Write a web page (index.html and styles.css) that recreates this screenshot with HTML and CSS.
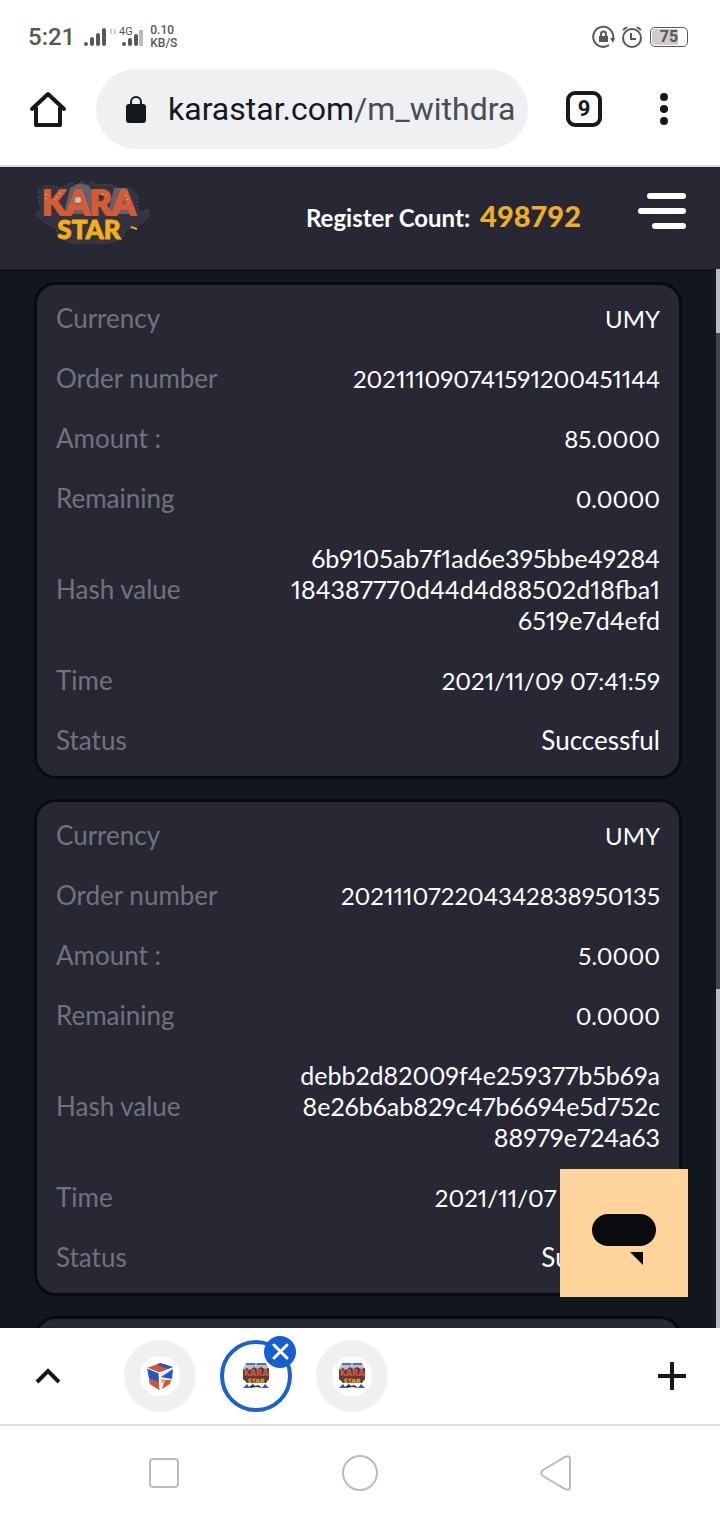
FILE: index.html
```html
<!DOCTYPE html>
<html lang="en">
<head>
  <meta charset="UTF-8">
  <meta name="viewport" content="width=device-width, initial-scale=1">
  <title>Kara Star</title>
  <link rel="stylesheet" href="styles.css">
</head>
<body>
  <!-- Phone status bar -->
  <div class="status-bar">
    <span class="clock">5:21</span>
    <svg class="signal" width="60" height="24" viewBox="0 0 60 24" aria-hidden="true">
      <g stroke="#5c5658" stroke-width="4" stroke-linecap="round">
        <path d="M3 19v0M9 14v5M15 10v9M21 5v14"/>
        <path d="M41 19v0M47 15v4M53 11v8"/>
      </g>
      <path d="M58 5v16" stroke="#bbb" stroke-width="4"/>
      <path d="M28 4v5M32 4v5M27 6l2-2M33 7l-2 2" stroke="#d2d2d2" stroke-width="2"/>
      <text x="36" y="10" class="network">4G</text>
    </svg>
    <span class="speed">0.10<br>KB/S</span>
    <div class="status-right">
      <svg width="24" height="24" viewBox="0 0 24 24" fill="none" stroke="#5c5658" stroke-width="2" aria-hidden="true">
        <path d="M17 20a10 10 0 1 1 4-6"/>
        <path d="M18 13l5 0-2 5z" fill="#5c5658" stroke="none"/>
        <path d="M7 11h9v6H7z" fill="#5c5658" stroke="none"/>
        <path d="M9 12V9a2.500 2.500 0 0 1 5 0v3"/>
      </svg>
      <svg width="24" height="24" viewBox="0 0 24 24" fill="none" stroke="#5c5658" stroke-width="2" aria-hidden="true">
        <circle cx="12" cy="13" r="9"/>
        <path d="M11 8v6h5M3 5l4-3M21 5l-4-3"/>
      </svg>
      <span class="battery"><span>75</span></span>
    </div>
  </div>

  <!-- Browser toolbar -->
  <div class="toolbar">
    <button type="button" class="icon-btn" aria-label="Home">
      <svg width="36" height="36" viewBox="0 0 36 36" fill="none" stroke="#15181c" stroke-width="4" stroke-linecap="round" stroke-linejoin="round">
        <path d="M6 17v17h24V17M2 18L18 3l16 15"/>
      </svg>
    </button>
    <a href="#" class="address">
      <svg width="20" height="27" viewBox="0 0 20 27" aria-hidden="true">
        <rect y="8" width="20" height="19" rx="3" fill="#15181c"/>
        <path d="M5 9V6a5 5 0 0 1 10 0v3" fill="none" stroke="#15181c" stroke-width="2"/>
      </svg>
      <span class="url">karastar.com<span class="path">/m_withdra</span></span>
    </a>
    <button type="button" class="tab-count" aria-label="Tabs">9</button>
    <button type="button" class="icon-btn" aria-label="More">
      <svg width="36" height="36" viewBox="0 0 36 36" fill="#15181c">
        <circle cx="18" cy="6" r="4"/><circle cx="18" cy="18" r="4"/><circle cx="18" cy="30" r="4"/>
      </svg>
    </button>
  </div>

  <!-- Site header -->
  <header class="header">
    <a href="#" class="logo" aria-label="Kara Star">
      <svg width="116" height="64" viewBox="0 0 116 64">
        <path d="M4 10l10-5 12 3 10-5 8 2 5-5 3 5 6-4 4 4 14-1 8 4 12 0 8 8-1 12 5 4 6-3 4 5-8 7-8 6-10 2-4 10-14 4-20 2-18-2-12-6-2-9-12-6-9-8 6-5-2-8z" fill="#33343f" stroke="#4b4d59" stroke-dasharray="2 2"/>
        <path d="M30 34l6-26 10-5 9 3 8 12-2 16z" fill="#66606a"/>
        <path d="M74 34l6-26 12 0 8 26z" fill="#66606a"/>
        <text x="55" y="35" class="logo-kara">KARA</text>
        <text x="55" y="59" class="logo-star">STAR</text>
        <circle cx="44" cy="20" r="3" fill="#c0c4c3"/>
        <path d="M97 47l6 2" stroke="#e0ac28" stroke-width="2"/>
        <path d="M12 14l0 8M26 13l-5 7M68 14l6 1M92 15l3 8" stroke="#f4a56b" stroke-width="2" stroke-dasharray="1 3"/>
      </svg>
    </a>
    <div class="count">Register Count: <strong>498792</strong></div>
    <button type="button" class="menu-btn" aria-label="Menu">
      <span class="bar"></span>
      <span class="bar long"></span>
      <span class="bar short"></span>
    </button>
  </header>

  <main class="content">
    <div class="records">
      <dl class="card">
        <div class="row"><dt>Currency</dt><dd>UMY</dd></div>
        <div class="row"><dt>Order number</dt><dd>202111090741591200451144</dd></div>
        <div class="row"><dt>Amount :</dt><dd>85.0000</dd></div>
        <div class="row"><dt>Remaining</dt><dd>0.0000</dd></div>
        <div class="row"><dt>Hash value</dt><dd class="hash">6b9105ab7f1ad6e395bbe49284<br>184387770d44d4d88502d18fba1<br>6519e7d4efd</dd></div>
        <div class="row"><dt>Time</dt><dd>2021/11/09 07:41:59</dd></div>
        <div class="row"><dt>Status</dt><dd class="state">Successful</dd></div>
      </dl>
      <dl class="card">
        <div class="row"><dt>Currency</dt><dd>UMY</dd></div>
        <div class="row"><dt>Order number</dt><dd>202111072204342838950135</dd></div>
        <div class="row"><dt>Amount :</dt><dd>5.0000</dd></div>
        <div class="row"><dt>Remaining</dt><dd>0.0000</dd></div>
        <div class="row"><dt>Hash value</dt><dd class="hash">debb2d82009f4e259377b5b69a<br>8e26b6ab829c47b6694e5d752c<br>88979e724a63</dd></div>
        <div class="row"><dt>Time</dt><dd>2021/11/07 22:04:34</dd></div>
        <div class="row"><dt>Status</dt><dd class="state">Successful</dd></div>
      </dl>
      <div class="card next"></div>
    </div>
    <div class="scrollbar"></div>
    <button type="button" class="chat-btn" aria-label="Chat">
      <svg width="64" height="51" viewBox="0 0 64 51" fill="#090b0e">
        <rect width="64" height="32" rx="16"/>
        <path d="M38 38h13v13z"/>
      </svg>
    </button>
  </main>

  <!-- Browser tab strip -->
  <div class="tabs">
    <button type="button" class="icon-btn" aria-label="Show tabs">
      <svg width="36" height="36" viewBox="0 0 36 36" fill="none" stroke="#15181c" stroke-width="4">
        <path d="M7 24l11-11 11 11"/>
      </svg>
    </button>
    <div class="tab-list">
      <button type="button" class="tab" aria-label="Tab 1">
        <span class="tab-icon">
          <svg width="28" height="28" viewBox="0 0 28 28">
            <path d="M1 6l12 5 1 17L4 22z" fill="#2459c4"/>
            <path d="M13 11l14-5-2 16-11 6z" fill="#e8eaf0"/>
            <path d="M1 6L14 1l13 4-13 6z" fill="#d45635"/>
            <path d="M14 1l13 4-5 2-11-4z" fill="#2459c4"/>
            <path d="M3 16l10 4v8l-9-6z" fill="#d45635"/>
            <path d="M15 15l12-8-1 10z" fill="#2459c4"/>
            <path d="M19 18l6 0-1 4-8 5z" fill="#d45635"/>
            <circle cx="17" cy="19" r="2" fill="#e9b83d"/>
            <path d="M1 6l12 5 14-5M13 11l1 17" stroke="#fff" fill="none"/>
          </svg>
        </span>
      </button>
      <button type="button" class="tab active" aria-label="Close tab 2">
        <span class="tab-icon">
          <svg width="28" height="28" viewBox="0 0 28 28">
            <path d="M4 1h20l3 6v8H1V7z" fill="#b9bfc9"/>
            <path d="M4 2h9M15 2h9" stroke="#2459b8" stroke-width="1.5"/>
            <path d="M1 8l4-2 3 2 4-3 3 2 4-2 4 2 4-1v11l-3 4H5l-4-4z" fill="#5b3b40"/>
            <text x="14" y="14" class="tab-logo-kara">KARA</text>
            <text x="14" y="21" class="tab-logo-star">STAR</text>
            <path d="M1 26l4-4 3 4zM27 26l-4-4-3 4z" fill="#2c5cb5"/>
            <path d="M7 25l4-3 2 2 3-1 5 3-7-1-5 1z" fill="#343640"/>
          </svg>
        </span>
        <span class="close">
          <svg width="32" height="32" viewBox="0 0 32 32" stroke="#fff" stroke-width="3" stroke-linecap="round">
            <path d="M10 9l13 13M23 9L10 22"/>
          </svg>
        </span>
      </button>
      <button type="button" class="tab" aria-label="Tab 3">
        <span class="tab-icon">
          <svg width="28" height="28" viewBox="0 0 28 28">
            <path d="M4 1h20l3 6v8H1V7z" fill="#b9bfc9"/>
            <path d="M4 2h9M15 2h9" stroke="#2459b8" stroke-width="1.5"/>
            <path d="M1 8l4-2 3 2 4-3 3 2 4-2 4 2 4-1v11l-3 4H5l-4-4z" fill="#5b3b40"/>
            <text x="14" y="14" class="tab-logo-kara">KARA</text>
            <text x="14" y="21" class="tab-logo-star">STAR</text>
            <path d="M1 26l4-4 3 4zM27 26l-4-4-3 4z" fill="#2c5cb5"/>
            <path d="M7 25l4-3 2 2 3-1 5 3-7-1-5 1z" fill="#343640"/>
          </svg>
        </span>
      </button>
    </div>
    <button type="button" class="icon-btn" aria-label="New tab">
      <svg width="36" height="36" viewBox="0 0 36 36" stroke="#15181c" stroke-width="4">
        <path d="M4 18h28M18 4v28"/>
      </svg>
    </button>
  </div>

  <!-- Phone navigation -->
  <nav class="phone-nav">
    <button type="button" aria-label="Recent apps">
      <svg width="40" height="40" viewBox="0 0 40 40"><rect x="6" y="6" width="28" height="28" rx="3"/></svg>
    </button>
    <button type="button" aria-label="Home screen">
      <svg width="40" height="40" viewBox="0 0 40 40"><circle cx="20" cy="20" r="17"/></svg>
    </button>
    <button type="button" aria-label="Back">
      <svg width="40" height="40" viewBox="0 0 40 40"><path d="M7 17L29 4q5-2 5 2v28q0 4-5 2L7 23q-4-3 0-6z"/></svg>
    </button>
  </nav>
</body>
</html>
```
FILE: styles.css
```css
* {
  box-sizing: border-box;
}
body {
  display: flex;
  flex-direction: column;
  height: 100vh;
  margin: 0;
  background: #fff;
  font-family: Lato, sans-serif;
}
button {
  padding: 0;
  border: none;
  background: none;
  font-family: inherit;
  cursor: pointer;
}
a {
  color: inherit;
  text-decoration: none;
}
svg {
  display: block;
}

/* Status bar */
.status-bar {
  display: flex;
  align-items: center;
  height: 69px;
  padding: 4px 32px 0 28px;
  color: #5c5658;
  font-family: Roboto, sans-serif;
}
.clock {
  font-size: 24px;
  font-weight: 500;
}
.signal {
  margin-left: 8px;
}
.network {
  font-size: 11px;
  fill: #5c5658;
}
.speed {
  margin-left: 7px;
  font-size: 12px;
  font-weight: 500;
  line-height: 13px;
}
.status-right {
  display: flex;
  align-items: center;
  gap: 4px;
  margin-left: auto;
}
.battery {
  width: 38px;
  height: 20px;
  margin-left: 2px;
  padding: 1px;
  border: 1px solid #5c5658;
  border-radius: 5px;
  font-size: 16px;
  font-weight: 700;
  line-height: 16px;
  text-align: center;
}
.battery span {
  display: block;
  border-radius: 3px;
  background: linear-gradient(to right, #ccc 75%, #fff 75%);
}

/* Toolbar */
.toolbar {
  display: flex;
  align-items: center;
  height: 98px;
  padding: 0 38px 16px 30px;
  border-bottom: 2px solid #dcdce2;
}
.icon-btn {
  flex: none;
}
.address {
  display: flex;
  flex: 1;
  align-items: center;
  gap: 22px;
  min-width: 0;
  height: 80px;
  margin: 0 38px 0 30px;
  padding: 0 12px 0 30px;
  border-radius: 40px;
  background: #eef0f2;
}
.url {
  color: #15181c;
  font-family: Roboto, sans-serif;
  font-size: 32px;
  white-space: nowrap;
}
.path {
  color: #4a4d51;
}
.tab-count {
  flex: none;
  width: 36px;
  height: 36px;
  margin-right: 44px;
  border: 4px solid #15181c;
  border-radius: 9px;
  color: #15181c;
  font-family: Roboto, sans-serif;
  font-size: 22px;
  font-weight: 700;
  line-height: 28px;
}

/* Site header */
.header {
  display: flex;
  align-items: center;
  height: 102px;
  padding: 0 34px;
  background: #272834;
  color: #fff;
}
.logo {
  margin-bottom: 12px;
}
.logo-kara {
  fill: #d35c38;
  stroke: #d35c38;
  stroke-width: 2px;
  stroke-linejoin: round;
  font: 900 34px Lato, sans-serif;
  text-anchor: middle;
}
.logo-star {
  fill: #f3b31b;
  stroke: #f0a41d;
  stroke-width: 1px;
  stroke-linejoin: round;
  font: 900 26px Lato, sans-serif;
  text-anchor: middle;
}
.count {
  display: flex;
  align-items: baseline;
  gap: 10px;
  margin-right: 57px;
  margin-bottom: 6px;
  margin-left: auto;
  font-size: 24px;
  font-weight: 700;
}
.count strong {
  color: #f0ad2b;
  font-size: 29px;
}
.menu-btn {
  display: flex;
  flex-direction: column;
  align-items: flex-end;
  gap: 9px;
  margin-bottom: 14px;
}
.bar {
  width: 39px;
  height: 6px;
  border-radius: 3px;
  background: #fff;
}
.bar.long {
  width: 48px;
}
.bar.short {
  width: 34px;
}

/* Withdrawal records */
.content {
  position: relative;
  flex: 1;
  min-height: 0;
  overflow: hidden;
  background: #12161d;
}
.records {
  display: flex;
  flex-direction: column;
  gap: 20px;
  padding: 13px 38px 0 34px;
}
.card {
  margin: 0;
  padding: 4px 19px 5px;
  border: 3px solid #090b12;
  border-radius: 22px;
  background: #272834;
}
.card.next {
  min-height: 80px;
}
.row {
  display: flex;
  align-items: center;
  justify-content: space-between;
  padding: 14px 0 15px;
  font-size: 24px;
  font-variant-numeric: proportional-nums;
  line-height: 31px;
}
dt {
  color: #71727e;
  font-size: 26px;
}
dd {
  margin: 0;
  color: #fff;
  text-align: right;
}
.hash {
  font-size: 25px;
}
.state {
  font-size: 26px;
}
.scrollbar {
  position: absolute;
  top: 0;
  right: 0;
  bottom: 0;
  width: 4px;
  background: linear-gradient(#b7bec5 6%, #42454d 6%, #42454d 68%, #b7bec5 68%);
}
.chat-btn {
  display: flex;
  position: absolute;
  right: 32px;
  bottom: 31px;
  justify-content: center;
  width: 128px;
  height: 128px;
  padding-top: 45px;
  background: #ffd59e;
}

/* Tab strip */
.tabs {
  display: flex;
  align-items: center;
  height: 98px;
  padding: 0 30px;
  border-bottom: 2px solid #dedede;
}
.tab-list {
  display: flex;
  flex: 1;
  gap: 24px;
  margin-left: 58px;
}
.tab {
  display: flex;
  position: relative;
  align-items: center;
  justify-content: center;
  width: 72px;
  height: 72px;
  border-radius: 50%;
  background: #eff0f2;
}
.tab-icon {
  display: flex;
  align-items: center;
  justify-content: center;
  width: 40px;
  height: 40px;
  border-radius: 50%;
  background: #fff;
}
.tab.active {
  border: 4px solid #1b62c9;
  background: #fff;
}
.close {
  position: absolute;
  top: -8px;
  right: -8px;
  border-radius: 50%;
  background: #165fd0;
}
.tab-logo-kara {
  fill: #d7583a;
  font: 700 8px "DejaVu Sans", sans-serif;
  text-anchor: middle;
}
.tab-logo-star {
  fill: #f5ad22;
  font: 700 6px "DejaVu Sans", sans-serif;
  text-anchor: middle;
}

/* Phone navigation */
.phone-nav {
  display: flex;
  align-items: center;
  justify-content: space-between;
  height: 94px;
  padding: 0 144px;
}
.phone-nav svg {
  fill: none;
  stroke: #bcbcbc;
  stroke-width: 2px;
}
```
